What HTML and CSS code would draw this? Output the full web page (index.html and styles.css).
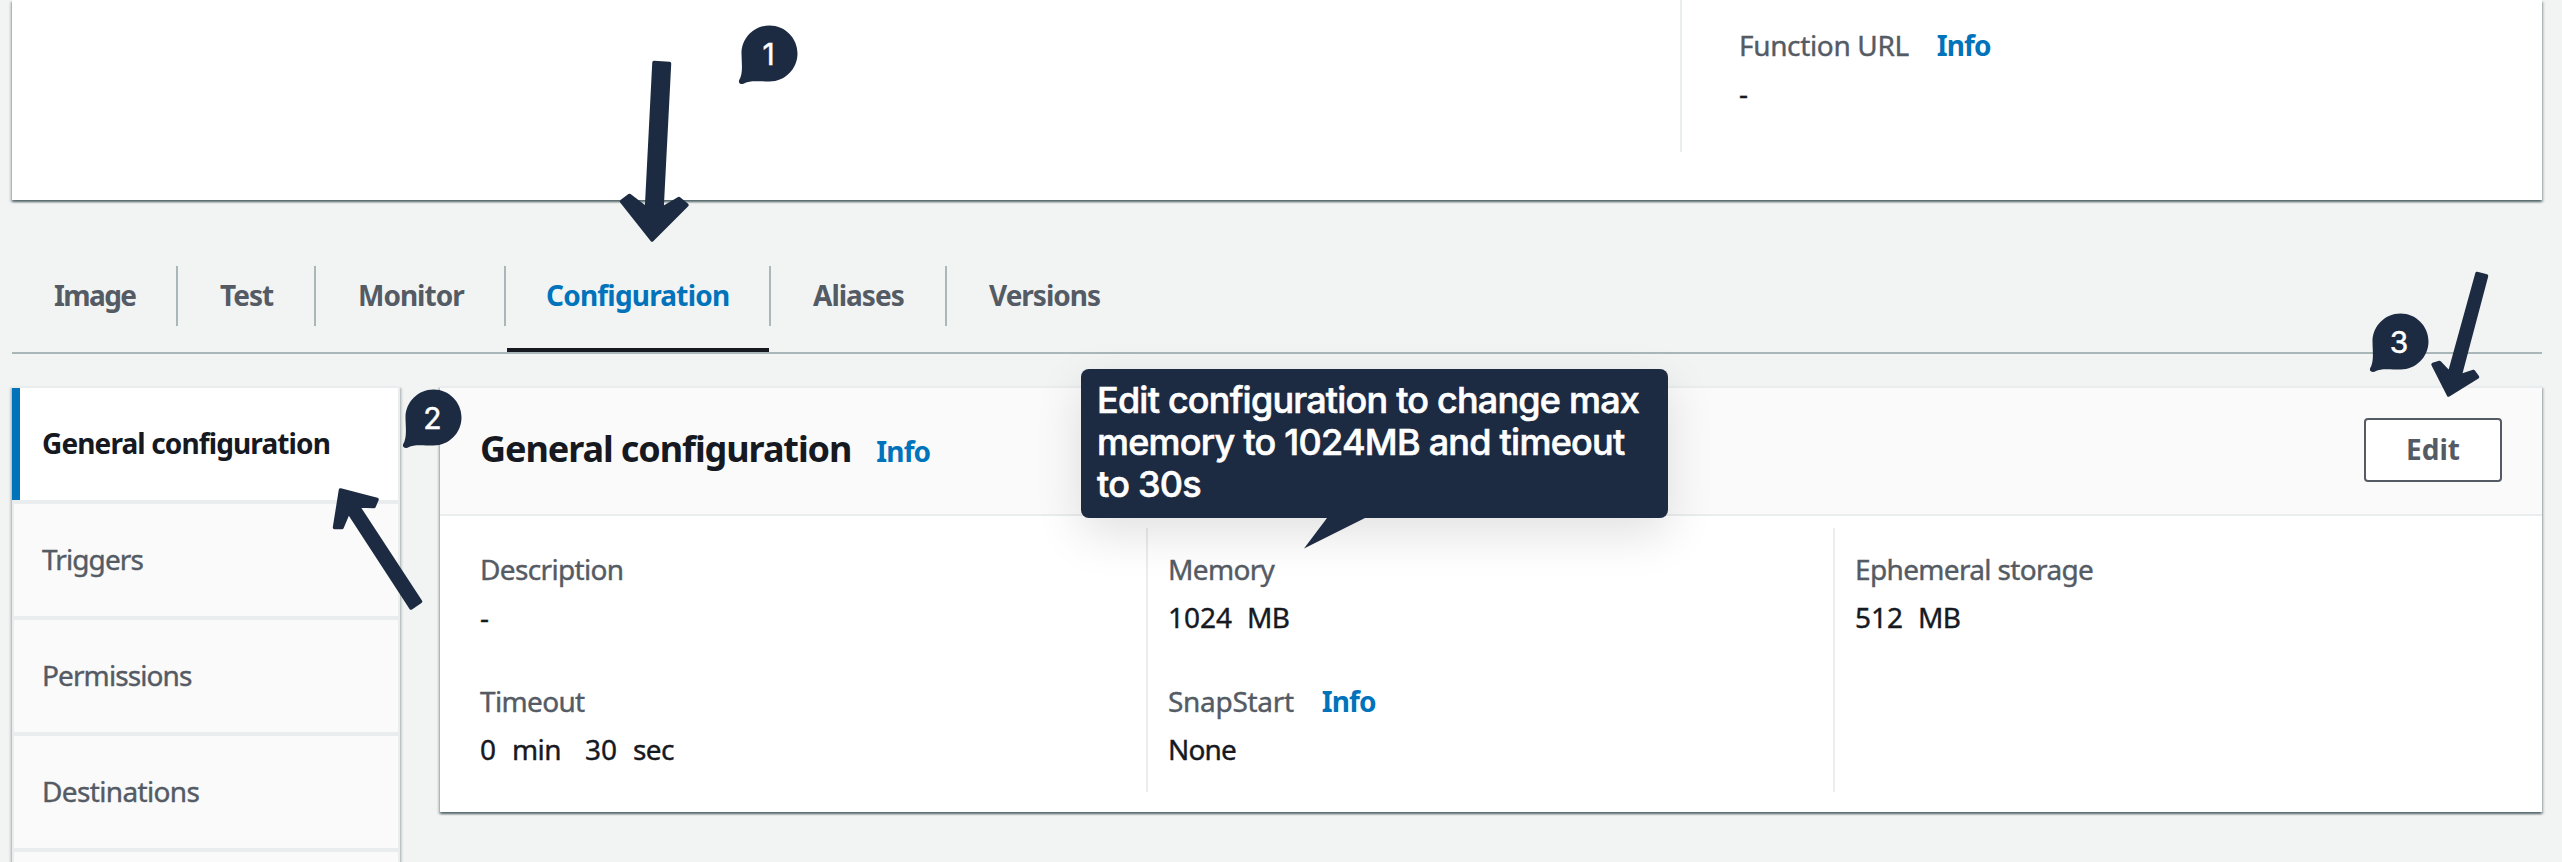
FILE: index.html
```
<!DOCTYPE html>
<html lang="en">
<head>
<meta charset="utf-8">
<title>General configuration</title>
<link rel="stylesheet" href="styles.css">
</head>
<body>
<div class="page">
  <section class="card overview">
    <div class="overview-col">
      <div class="label url">Function URL<a class="info">Info</a></div>
      <div class="value">-</div>
    </div>
  </section>

  <nav class="tabs">
    <a class="tab tab-image"><span>Image</span></a>
    <a class="tab tab-test"><span>Test</span></a>
    <a class="tab tab-monitor"><span>Monitor</span></a>
    <a class="tab tab-config active"><span>Configuration</span></a>
    <a class="tab tab-aliases"><span>Aliases</span></a>
    <a class="tab tab-versions"><span>Versions</span></a>
  </nav>

  <div class="body">
    <aside class="side">
      <a class="side-item selected">General configuration</a>
      <a class="side-item">Triggers</a>
      <a class="side-item">Permissions</a>
      <a class="side-item wide">Destinations</a>
      <a class="side-item"></a>
    </aside>
    <main class="card main">
      <header class="head">
        <h2>General configuration</h2><a class="info">Info</a>
        <button class="edit">Edit</button>
      </header>
      <div class="cols">
        <div class="col first">
          <div class="field"><div class="label">Description</div><div class="value">-</div></div>
          <div class="field"><div class="label">Timeout</div><div class="value units"><span class="n0">0</span><span class="min">min</span><span class="n30">30</span><span>sec</span></div></div>
        </div>
        <div class="col">
          <div class="field"><div class="label">Memory</div><div class="value units"><span class="qty">1024</span><span class="mb">MB</span></div></div>
          <div class="field"><div class="label snap">SnapStart<a class="info">Info</a></div><div class="value word">None</div></div>
        </div>
        <div class="col">
          <div class="field"><div class="label">Ephemeral storage</div><div class="value units"><span class="qty">512</span><span class="mb">MB</span></div></div>
        </div>
      </div>
    </main>
  </div>

  <div class="callout">
    <div class="line1">Edit configuration to change max</div>
    <div class="line2">memory to 1024MB and timeout</div>
    <div class="line3">to 30s</div>
    <svg class="tail" viewBox="0 0 62 31" width="62" height="31"><path d="M23 0H61L0 30.500Z"/></svg>
  </div>

  <svg class="marks" viewBox="0 0 2562 862" width="2562" height="862">
    <defs>
      <path id="pin" d="M0-28C15.500-28 28-15.500 28 0S15.500 28 0 28C-9 28-20 26.500-24.500 29.500C-27 31.500-31.500 30.500-30.500 27C-26 20-28 9-28 0C-28-15.500-15.500-28 0-28Z"/>
    </defs>
    <g class="arrows">
      <path d="M654 62.500L669.500 63.500L662 208.500L679 198.500L687 205L652 240L621.500 201.500L629.500 195.500L646.500 208.500Z"/>
      <path d="M340.500 490L377 499.500L374 506.500L358 506L420.500 601.500L411 608L348.500 512L342 527.500L334.500 527.500Z"/>
      <path d="M2477 273.500L2486.500 276L2460 376L2473.500 371.500L2477.500 377L2448.500 395L2433 364.500L2439.500 362.500L2449.500 373Z"/>
    </g>
    <use href="#pin" x="769.5" y="53.500"/>
    <use href="#pin" x="433.5" y="417.500"/>
    <use href="#pin" x="2400.500" y="341.500"/>
    <text x="768.500" y="65">1</text>
    <text x="432.500" y="429">2</text>
    <text x="2399" y="353">3</text>
  </svg>
</div>
</body>
</html>
```
FILE: styles.css
```
* { box-sizing: border-box; }
body {
  margin: 0;
  background: #f2f4f3;
  font-family: "Noto Sans", "Open Sans", sans-serif;
  font-size: 28px;
  line-height: 44px;
  color: #16191f;
}
.page {
  position: relative;
  width: 2562px;
  height: 862px;
  padding: 0 20px 0 12px;
  overflow: hidden;
}
.card {
  background: #fff;
  box-shadow: 0 2px 2px rgba(0, 28, 36, .5), 2px 2px 2px rgba(0, 28, 36, .15), -2px 2px 2px rgba(0, 28, 36, .15);
}
.overview { height: 200px; display: flex; }
.overview-col {
  margin-left: 1668px;
  height: 152px;
  padding: 23px 0 0 57px;
  border-left: 2px solid #eaeded;
}
.label, .value, .side-item { -webkit-text-stroke: .4px currentColor; }
.label { color: #545b64; letter-spacing: -.65px; white-space: nowrap; }
.label.url { letter-spacing: -.35px; }
.label.snap { letter-spacing: -.3px; }
.value.word { letter-spacing: -.8px; }
.label + .value { margin-top: 4px; }
.info {
  color: #0073bb;
  font-size: 28px;
  font-weight: 700;
  letter-spacing: -.9px;
  margin-left: 28px;
  -webkit-text-stroke: 0;
}

.tabs {
  display: flex;
  height: 154px;
  padding-top: 66px;
  border-bottom: 2px solid #aab7b8;
}
.tab {
  position: relative;
  height: 86px;
  padding-left: 42px;
  color: #545b64;
  font-weight: 700;
  letter-spacing: -1px;
  line-height: 58px;
}
.tab::after {
  content: "";
  position: absolute;
  right: 0;
  top: 0;
  width: 2px;
  height: 60px;
  background: #aab7b8;
}
.tab-image { width: 166px; }
.tab-image span { letter-spacing: -1.6px; }
.tab-test { width: 138px; }
.tab-monitor { width: 190px; }
.tab-config { width: 265px; padding-left: 40px; letter-spacing: -.8px; }
.tab-aliases { width: 176px; }
.tab-versions { width: 194px; }
.tab-versions::after { display: none; }
.tab.active { color: #0073bb; }
.tab.active::before {
  content: "";
  position: absolute;
  left: 1px;
  right: 2px;
  bottom: 0;
  height: 4px;
  background: #16191f;
}

.body { display: flex; align-items: flex-start; gap: 40px; padding-top: 32px; }
.side {
  width: 388px;
  border: solid #eaeded;
  border-width: 2px 2px 0 2px;
  box-shadow: 0 2px 2px rgba(0, 28, 36, .3), 2px 2px 2px rgba(0, 28, 36, .15), -2px 2px 2px rgba(0, 28, 36, .15);
}
.side-item {
  display: block;
  height: 116px;
  padding-left: 28px;
  border-bottom: 4px solid #eaeded;
  background: #fafafa;
  color: #545b64;
  line-height: 110px;
  letter-spacing: -.9px;
}
.side-item.wide { letter-spacing: -.65px; }
.side-item.selected {
  margin-left: -2px;
  border-left: 8px solid #0073bb;
  border-bottom: 0;
  height: 112px;
  padding-left: 22px;
  background: #fff;
  color: #16191f;
  font-weight: 700;
  letter-spacing: -.88px;
  -webkit-text-stroke: 0;
}
.side-item.selected + .side-item { border-top: 4px solid #eaeded; height: 120px; }

.main { width: 2102px; height: 426px; border-top: 2px solid #eaeded; }
.head {
  display: flex;
  align-items: flex-start;
  height: 128px;
  padding: 30px 40px 0;
  background: #fafafa;
  border-bottom: 2px solid #eaeded;
}
h2 { margin: 9px 0 0; font-size: 36px; font-weight: 700; letter-spacing: -1.08px; }
.head .info { margin: 11px 0 0 25px; }
.edit {
  margin-left: auto;
  width: 138px;
  height: 64px;
  padding: 0 0 2px;
  border: 2px solid #545b64;
  border-radius: 4px;
  background: #fff;
  color: #545b64;
  font: 700 28px/58px "Noto Sans", sans-serif;
}
.cols { display: grid; grid-template-columns: 706px 687px 1fr; padding-top: 12px; }
.col {
  height: 264px;
  padding: 19px 0 0 20px;
  border-left: 2px solid #eaeded;
}
.col.first { padding-left: 40px; border-left: 0; }
.field + .field { margin-top: 40px; }
.units { display: flex; }
.units .mb { margin-left: 15px; }
.units .n0 { width: 32px; }
.units .min { width: 73px; letter-spacing: -.6px; }
.units .n30 { width: 48px; }
.units span:last-child { letter-spacing: -.6px; }

.callout {
  position: absolute;
  left: 1081px;
  top: 369px;
  width: 587px;
  height: 149px;
  padding: 10px 16px;
  border-radius: 8px;
  background: #1d2b42;
  box-shadow: 0 16px 48px rgba(0, 0, 0, .12);
  color: #fff;
  font: 500 36px/42px Inter, sans-serif;
  -webkit-text-stroke: .6px #fff;
  white-space: nowrap;
}
.line1 { letter-spacing: -.8px; }
.line2 { letter-spacing: -.75px; }
.line3 { letter-spacing: -.75px; }
.tail { position: absolute; left: 223px; top: 148.500px; fill: #1d2b42; }
.marks { position: absolute; left: 0; top: 0; fill: #1d2b42; }
.arrows { stroke: #1d2b42; stroke-width: 3.500; stroke-linejoin: round; }
.marks text { fill: #fff; font: 400 30px Inter, sans-serif; text-anchor: middle; stroke: #fff; stroke-width: .5; }
```
